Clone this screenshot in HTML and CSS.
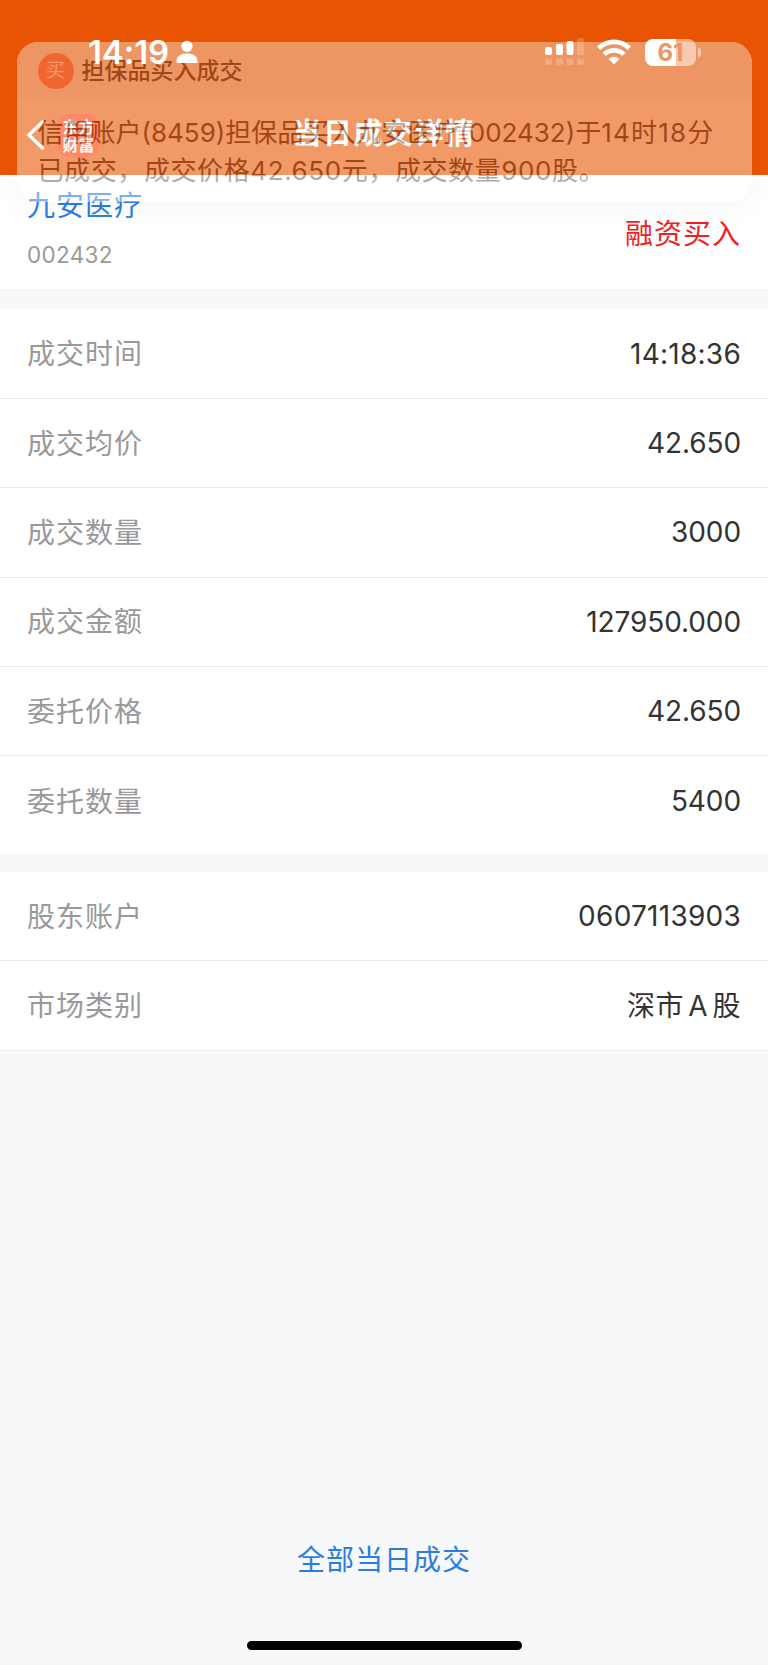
FILE: index.html
```html
<!DOCTYPE html>
<html lang="zh-CN">
<head>
	<meta charset="utf-8">
	<title>当日成交详情</title>
	<link rel="stylesheet" href="styles.css">
</head>
<body>
	<div class="header">
		<div class="nav">
			<svg class="back" width="20" height="34" viewBox="0 0 20 34"><path d="M17.5 3 L3 17 L17.5 31" fill="none" stroke="#fff" stroke-width="3.4"/></svg>
			<div class="logo"><span>东方</span><span>财富</span></div>
			<h1>当日成交详情</h1>
		</div>
	</div>

	<div class="stock">
		<div>
			<div class="stock-name">九安医疗</div>
			<div class="stock-code">002432</div>
		</div>
		<div class="side">融资买入</div>
	</div>

	<div class="group deal">
		<div class="row"><span class="label">成交时间</span><span class="value wide">14:18:36</span></div>
		<div class="row"><span class="label">成交均价</span><span class="value">42.650</span></div>
		<div class="row"><span class="label">成交数量</span><span class="value">3000</span></div>
		<div class="row"><span class="label">成交金额</span><span class="value">127950.000</span></div>
		<div class="row"><span class="label">委托价格</span><span class="value">42.650</span></div>
		<div class="row"><span class="label">委托数量</span><span class="value">5400</span></div>
	</div>

	<div class="group account">
		<div class="row"><span class="label">股东账户</span><span class="value wide">0607113903</span></div>
		<div class="row"><span class="label">市场类别</span><span class="market">深市 A 股</span></div>
	</div>

	<a class="all-deals">全部当日成交</a>
	<div class="home-bar"></div>

	<!-- push notification, fading out over the header -->
	<div class="notice">
		<div class="notice-head"><span class="badge">买</span><span class="notice-title">担保品买入成交</span></div>
		<div class="notice-body">
			<div class="line1">信用账户(8459)担保品买入九安医疗(002432)于<span class="clock">14时18分</span></div>
			<div class="line2">已成交，成交价格42.650元，成交数量900股。</div>
		</div>
	</div>

	<div class="status">
		<span class="time">14:19</span>
		<svg class="person" width="22" height="24" viewBox="0 0 22 24" fill="#fff"><circle cx="11" cy="6.3" r="5.6"/><path d="M0.5 21.5 C0.5 16 5 13.6 11 13.6 S21.5 16 21.5 21.5 Q21.5 23 20 23 H2 Q0.5 23 0.5 21.5 Z"/></svg>
		<svg class="signal" width="39" height="28" viewBox="0 0 39 28" fill="#fff">
			<rect x="0" y="9" width="7" height="8" rx="2"/>
			<rect x="11" y="6" width="7" height="11" rx="2"/>
			<rect x="21.5" y="3" width="7" height="14" rx="2"/>
			<g opacity=".2">
				<rect x="32" y="0" width="7" height="17" rx="2"/>
				<rect x="0" y="20.5" width="7" height="6.5" rx="2"/>
				<rect x="11" y="20.5" width="7" height="6.5" rx="2"/>
				<rect x="21.5" y="20.5" width="7" height="6.5" rx="2"/>
				<rect x="32" y="20.5" width="7" height="6.5" rx="2"/>
			</g>
		</svg>
		<svg class="wifi" width="34" height="26" viewBox="0 0 34 26">
			<g fill="none" stroke="#fff" stroke-width="4.8">
				<path d="M1.6 9.2 C10 0.8 24 0.8 32.4 9.2"/>
				<path d="M7.2 15.4 C12.5 10 21.5 10 26.8 15.4"/>
			</g>
			<path d="M11.6 20 Q17 15.4 22.4 20 L17 25.4 Z" fill="#fff"/>
		</svg>
		<div class="battery">61</div>
		<span class="battery-tip"></span>
	</div>
</body>
</html>
```
FILE: styles.css
```css
* { box-sizing: border-box; }

body {
	position: relative;
	margin: 0;
	width: 768px;
	height: 1665px;
	overflow: hidden;
	background: #f6f8fa;
	color: #333;
	font-family: Inter, "Noto Sans CJK SC", sans-serif;
	font-size: 28px;
	display: flex;
	flex-direction: column;
}

/* header */
.header {
	height: 174.5px;
	flex: none;
	background: #ea5504;
	padding-top: 96px;
}

.nav {
	position: relative;
	height: 78px;
	display: flex;
	align-items: center;
	padding-left: 26px;
	color: #fff;
}

.logo {
	width: 43px;
	height: 43px;
	margin-left: 11px;
	border-radius: 14px;
	background: #ff3800;
	display: flex;
	flex-direction: column;
	align-items: center;
	justify-content: center;
	font: 700 16px/18px "Noto Sans CJK SC", sans-serif;
}

h1 {
	position: absolute;
	left: 0;
	right: 0;
	top: 17px;
	margin: 0;
	text-align: center;
	font-size: 29px;
	font-weight: 700;
	line-height: 42px;
	letter-spacing: 1.5px;
}

/* stock summary */
.stock {
	height: 116px;
	flex: none;
	background: #fff;
	border-bottom: 1px solid #eee;
	padding: 11px 27px 0;
	display: flex;
	justify-content: space-between;
}

.stock-name {
	color: #2b7de1;
	line-height: 40px;
	letter-spacing: 1px;
}

.stock-code {
	margin-top: 15px;
	color: #999;
	font-size: 22.5px;
	line-height: 28px;
	letter-spacing: 0.3px;
}

.side {
	margin-top: 28px;
	color: #f01e23;
	line-height: 40px;
	letter-spacing: 1px;
}

/* detail rows */
.group {
	flex: none;
	margin-top: 18px;
	background: #fff;
}

.deal {
	padding-top: 1px;
	padding-bottom: 8px;
}

.row {
	height: 89.4px;
	padding: 0 27px;
	display: flex;
	align-items: center;
	justify-content: space-between;
	border-bottom: 1px solid #ebebeb;
}

.deal .row:last-child { border-bottom: 0; }

.label {
	color: #999;
	letter-spacing: 1px;
	padding-bottom: 3px;
}

.value { letter-spacing: -0.1px; }

.wide { letter-spacing: 0.25px; }

.market {
	letter-spacing: 0.5px;
	word-spacing: -4px;
	padding-bottom: 2px;
}

/* footer */
.all-deals {
	margin-top: 489px;
	text-align: center;
	color: #2b7de1;
	line-height: 40px;
	letter-spacing: 1px;
}

.home-bar {
	width: 275px;
	height: 9px;
	flex: none;
	margin: 61px auto 0;
	border-radius: 5px;
	background: #000;
}

/* notification */
.notice {
	position: absolute;
	left: 16.5px;
	top: 42px;
	width: 735px;
	height: 160px;
	border-radius: 21px;
	overflow: hidden;
	background: #fff;
	box-shadow: 0 4px 24px rgba(0, 0, 0, .08);
	opacity: .4;
}

.notice-head {
	height: 57px;
	padding-left: 21px;
	background: #f5f5f5;
	display: flex;
	align-items: center;
	font-size: 23px;
	font-weight: 500;
}

.notice-title { padding-bottom: 4px; }

.badge {
	width: 36px;
	height: 36px;
	margin-right: 8px;
	border-radius: 50%;
	background: #fb8078;
	color: #fff;
	font-size: 19px;
	font-weight: 400;
	line-height: 35px;
	text-align: center;
}

.notice-body {
	padding: 15px 20px 0 21px;
	font-size: 26px;
	line-height: 38px;
	white-space: nowrap;
}

.clock { letter-spacing: 1.2px; }

.line2 { letter-spacing: 0.6px; }

/* status bar */
.status {
	position: absolute;
	left: 0;
	top: 36px;
	width: 768px;
	height: 32px;
	display: flex;
	align-items: center;
	color: #fff;
}

.time {
	width: 80px;
	margin-left: 88px;
	font-size: 33px;
	font-weight: 600;
	letter-spacing: -0.1px;
}

.person { margin-left: 8px; }
.signal { margin-left: 347px; }
.wifi { margin-left: 13px; }

.battery {
	width: 51px;
	height: 27px;
	margin-left: 14px;
	border-radius: 8px;
	background: linear-gradient(90deg, #fff 61%, rgba(255, 255, 255, .5) 61%);
	color: #ef9464;
	font-size: 24px;
	font-weight: 700;
	line-height: 27px;
	text-align: center;
}

.battery-tip {
	width: 3px;
	height: 9px;
	margin-left: 2px;
	border-radius: 0 4px 4px 0;
	background: rgba(255, 255, 255, .5);
}
```
